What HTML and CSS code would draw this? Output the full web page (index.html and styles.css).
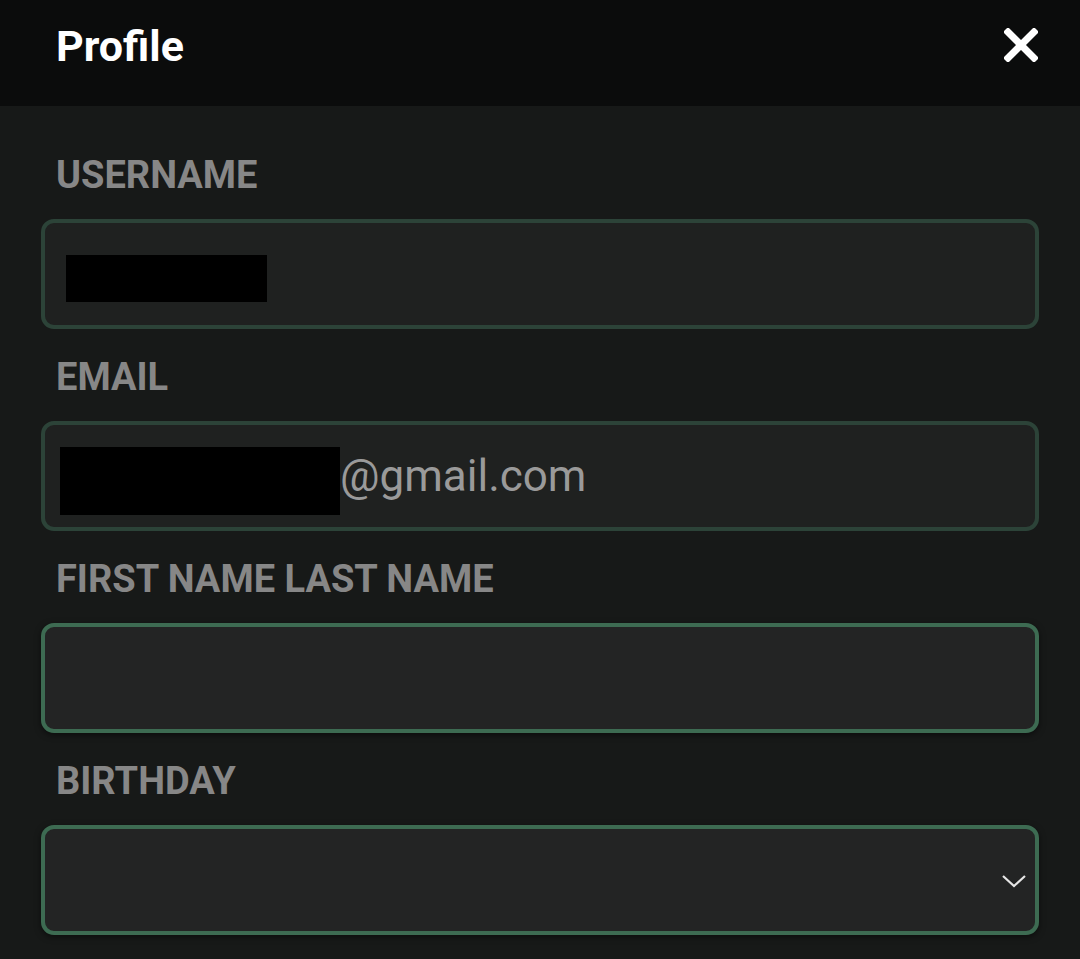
FILE: index.html
```html
<!DOCTYPE html>
<html>
<head>
<meta charset="utf-8">
<link rel="stylesheet" href="styles.css">
</head>
<body>
<div class="app">
  <header class="topbar">
    <h1 class="title">Profile</h1>
    <button class="close" aria-label="Close">
      <svg width="34" height="34" viewBox="0 0 34 34"><path d="M4 4 L30 30 M30 4 L4 30" stroke="#fff" stroke-width="7" stroke-linecap="square"/></svg>
    </button>
  </header>
  <main class="form">
    <div class="field">
      <div class="label">USERNAME</div>
      <div class="input dim"><span class="redact redact-user"></span></div>
    </div>
    <div class="field">
      <div class="label">EMAIL</div>
      <div class="input dim email"><span class="redact redact-email"></span><span class="value">@gmail.com</span></div>
    </div>
    <div class="field">
      <div class="label">FIRST NAME LAST NAME</div>
      <div class="input bright"></div>
    </div>
    <div class="field">
      <div class="label">BIRTHDAY</div>
      <div class="input bright select">
        <svg class="chev" width="26" height="16" viewBox="0 0 26 16"><path d="M2 3 L13 13 L24 3" fill="none" stroke="#e6e6e6" stroke-width="2.2"/></svg>
      </div>
    </div>
  </main>
</div>
</body>
</html>
```
FILE: styles.css
```css
* { box-sizing: border-box; }
html, body { margin: 0; padding: 0; }
body {
  background: #171918;
  font-family: Roboto, "Liberation Sans", sans-serif;
  width: 1080px;
  height: 959px;
  overflow: hidden;
}
.topbar {
  height: 106px;
  background: #0b0c0c;
  display: flex;
  align-items: flex-start;
  justify-content: space-between;
  padding: 0 42px 0 56px;
}
.title {
  margin: 0;
  margin-top: 20px;
  color: #fff;
  font-size: 43px;
  font-weight: 700;
  line-height: 52px;
}
.close {
  background: none;
  border: 0;
  padding: 0;
  margin-top: 28px;
  width: 34px;
  height: 34px;
}
.close svg { display: block; }
.form {
  padding: 0 41px;
  display: flex;
  flex-direction: column;
  gap: 26px;
  padding-top: 47px;
}
.field {
  display: flex;
  flex-direction: column;
}
.label {
  color: #878787;
  font-size: 38px;
  font-weight: 700;
  line-height: 41px;
  padding-left: 15px;
  padding-top: 2px;
  margin-bottom: 23px;
}
.input {
  height: 110px;
  border-radius: 13px;
  border: 4px solid #2c4338;
  background: #1f2120;
  display: flex;
  align-items: center;
  position: relative;
}
.input.bright {
  border-color: #3d6b52;
  background: #232424;
  box-shadow: 0 2px 6px rgba(0,0,0,0.5);
}
.redact { background: #000; display: block; }
.redact-user { width: 201px; height: 47px; margin-left: 21px; margin-top: 8px; }
.redact-email { width: 280px; height: 68px; margin-left: 15px; margin-top: 10px; }
.value {
  color: #9a9a9a;
  font-size: 44px;
  line-height: 48px;
  margin-top: 0;
}
.select { justify-content: flex-end; padding-right: 8px; }
.chev { display: block; margin-top: 2px; }
```
